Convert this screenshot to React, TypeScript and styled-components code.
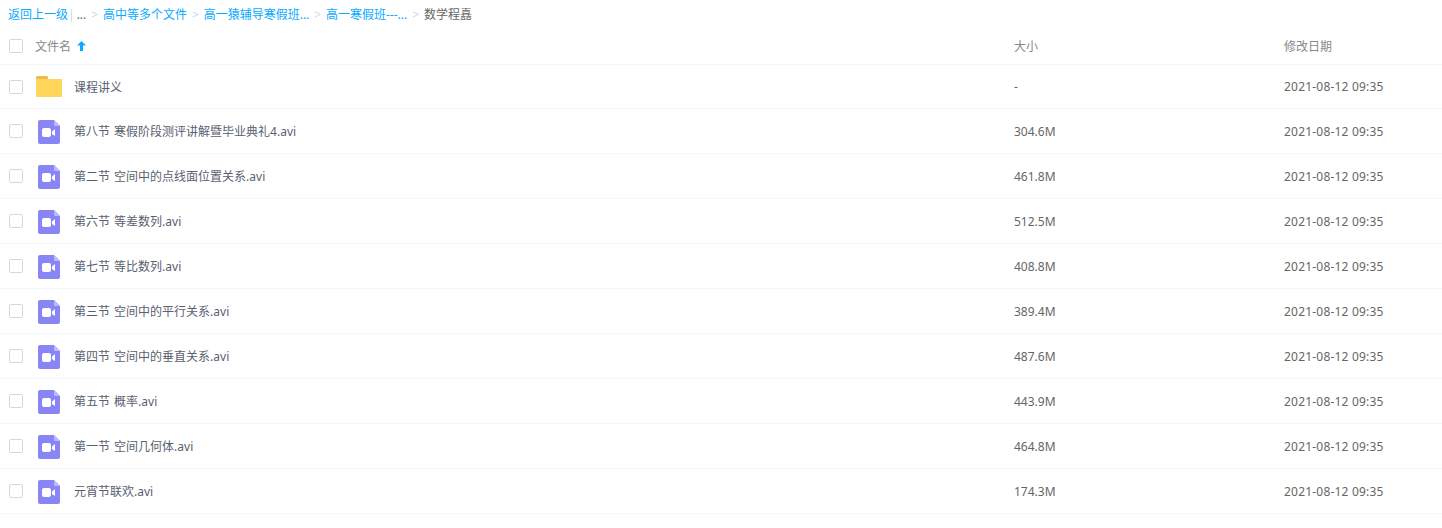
import { createGlobalStyle, styled } from "styled-components";

const files = [
  { name: "第八节 寒假阶段测评讲解暨毕业典礼4.avi", size: "304.6M" },
  { name: "第二节 空间中的点线面位置关系.avi", size: "461.8M" },
  { name: "第六节 等差数列.avi", size: "512.5M" },
  { name: "第七节 等比数列.avi", size: "408.8M" },
  { name: "第三节 空间中的平行关系.avi", size: "389.4M" },
  { name: "第四节 空间中的垂直关系.avi", size: "487.6M" },
  { name: "第五节 概率.avi", size: "443.9M" },
  { name: "第一节 空间几何体.avi", size: "464.8M" },
  { name: "元宵节联欢.avi", size: "174.3M" },
];

const DATE = "2021-08-12 09:35";

const FolderIcon = () => (
  <IconSvg width="26" height="21" viewBox="0 0 26 21">
    <path d="M0 1.500a1.500 1.500 0 0 1 1.500-1.500h9a1.500 1.500 0 0 1 1.500 1.500v2H0z" fill="#e8bc4d" />
    <path d="M0 4a1 1 0 0 1 1-1h24a1 1 0 0 1 1 1v16a1 1 0 0 1-1 1H1a1 1 0 0 1-1-1z" fill="#ffd659" />
  </IconSvg>
);

const VideoIcon = () => (
  <VideoSvg width="22" height="24" viewBox="0 0 22 24">
    <path d="M2 0h14l6 6v16a2 2 0 0 1-2 2H2a2 2 0 0 1-2-2V2a2 2 0 0 1 2-2z" fill="#8985f5" />
    <path d="M16 0l6 6h-5a1 1 0 0 1-1-1z" fill="#bcb9fa" />
    <rect x="4" y="8" width="9" height="9" rx="2" fill="#fff" />
    <path d="M14 11.500l3-2.500v7l-3-2z" fill="#fff" />
  </VideoSvg>
);

const App = () => {
  return (
    <Page>
      <GlobalStyle />
      <Breadcrumb>
        <CrumbLink>返回上一级</CrumbLink>
        <Pipe>|</Pipe>
        <Dots>...</Dots>
        <Arrow>&gt;</Arrow>
        <CrumbLink>高中等多个文件</CrumbLink>
        <Arrow>&gt;</Arrow>
        <CrumbLink>高一猿辅导寒假班...</CrumbLink>
        <Arrow>&gt;</Arrow>
        <CrumbLink>高一寒假班---...</CrumbLink>
        <Arrow>&gt;</Arrow>
        <Current>数学程嚞</Current>
      </Breadcrumb>
      <HeaderRow>
        <NameCell>
          <Checkbox />
          <HeaderLabel>文件名</HeaderLabel>
          <SortArrow viewBox="0 0 9 10">
            <path d="M4.500 0L9 4.500H6V10H3V4.500H0z" fill="#09aaff" />
          </SortArrow>
        </NameCell>
        <SizeCell>
          <HeaderLabel>大小</HeaderLabel>
        </SizeCell>
        <DateCell>
          <HeaderLabel>修改日期</HeaderLabel>
        </DateCell>
      </HeaderRow>
      <Row $first>
        <NameCell>
          <Checkbox />
          <IconBox>
            <FolderIcon />
          </IconBox>
          <FileName>课程讲义</FileName>
        </NameCell>
        <SizeCell>-</SizeCell>
        <DateCell>{DATE}</DateCell>
      </Row>
      {files.map((file) => (
        <Row key={file.name}>
          <NameCell>
            <Checkbox />
            <IconBox>
              <VideoIcon />
            </IconBox>
            <FileName>{file.name}</FileName>
          </NameCell>
          <SizeCell>{file.size}</SizeCell>
          <DateCell>{DATE}</DateCell>
        </Row>
      ))}
    </Page>
  );
};

export default App;

const GlobalStyle = createGlobalStyle`
  html, body {
    margin: 0;
    background: #fff;
  }
  body {
    font-family: "Noto Sans", "Noto Sans CJK SC", sans-serif;
    font-size: 12px;
    color: #666;
  }
`;

const Page = styled.div`
  width: 1442px;
  height: 528px;
  overflow: hidden;
`;

const Breadcrumb = styled.div`
  display: flex;
  align-items: center;
  height: 28px;
  padding-left: 8px;
`;

const CrumbLink = styled.span`
  color: #09aaff;
`;

const Pipe = styled.span`
  color: #c4d8f4;
  margin-right: 2px;
`;

const Dots = styled.span`
  color: #666;
`;

const Arrow = styled.span`
  width: 6.7px;
  color: #c4d8f4;
  margin: 0 5px;
`;

const Current = styled.span`
  color: #666;
`;

const HeaderRow = styled.div`
  display: grid;
  grid-template-columns: 1014px 270px 1fr;
  align-items: center;
  height: 36px;
  border-bottom: 1px solid #f2f6fd;
`;

const Row = styled.div<{ $first?: boolean }>`
  display: grid;
  grid-template-columns: 1014px 270px 1fr;
  align-items: center;
  height: ${({ $first }) => ($first ? "43px" : "44px")};
  border-bottom: 1px solid #f2f6fd;
`;

const NameCell = styled.div`
  display: flex;
  align-items: center;
  padding-left: 9px;
`;

const SizeCell = styled.div`
  color: #666;
`;

const DateCell = styled.div`
  color: #666;
  letter-spacing: 0.2px;
`;

const Checkbox = styled.span`
  box-sizing: border-box;
  width: 14px;
  height: 14px;
  border: 1px solid #d4d7de;
  border-radius: 2px;
  background: #fff;
  margin-right: 12px;
`;

const HeaderLabel = styled.span`
  color: #888;
  letter-spacing: 0;
  margin-bottom: 1px;
`;

const SortArrow = styled.svg`
  width: 9px;
  height: 10px;
  margin: 0 0 1px 6px;
`;

const IconBox = styled.span`
  display: flex;
  justify-content: center;
  width: 28px;
  margin-right: 12px;
`;

const IconSvg = styled.svg`
  display: block;
`;

const VideoSvg = styled(IconSvg)`
  margin-top: 2px;
`;

const FileName = styled.span`
  color: #5a6070;
  word-spacing: 1px;
  margin-left: -1px;
`;
